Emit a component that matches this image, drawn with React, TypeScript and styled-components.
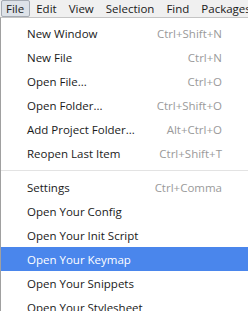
import styled, { createGlobalStyle } from "styled-components";

const GlobalStyle = createGlobalStyle`
  html, body {
    margin: 0;
    padding: 0;
    overflow: hidden;
    background: #ffffff;
  }
`;

const Window = styled.div`
  width: 248px;
  height: 311px;
  overflow: hidden;
  font-family: "Open Sans", "Noto Sans", sans-serif;
  font-size: 11.5px;
  color: #1a1a1a;
  display: flex;
  flex-direction: column;
`;

const MenuBar = styled.div`
  display: flex;
  align-items: center;
  height: 18px;
  background: #f0f0f0;
  padding-left: 1px;
  white-space: nowrap;
`;

interface IMenuTitle {
  active?: boolean;
}
const MenuTitle = styled.div<IMenuTitle>`
  box-sizing: border-box;
  height: 17px;
  line-height: 15px;
  padding: 0 5px 0 4px;
  margin-right: 1px;
  border: 1px solid ${(p) => (p.active ? "#a5abb3" : "transparent")};
  border-radius: 2px;
  background: ${(p) => (p.active ? "#dde2e8" : "transparent")};
`;

const Dropdown = styled.div`
  flex: 1;
  border-top: 1px solid #c4c4c4;
  border-left: 1px solid #a0a0a0;
  background: #ffffff;
  padding-top: 3px;
`;

interface IRow {
  selected?: boolean;
}
const Row = styled.div<IRow>`
  display: flex;
  justify-content: space-between;
  align-items: center;
  height: 24px;
  padding: 0 26px 0 26px;
  background: ${(p) => (p.selected ? "#4a86ec" : "transparent")};
  color: ${(p) => (p.selected ? "#ffffff" : "#1a1a1a")};
  white-space: nowrap;
`;

const Shortcut = styled.span`
  color: #9a9a9a;
`;

const Separator = styled.div`
  height: 1px;
  background: #e3e3e3;
  margin: 5px 0 4px 0;
`;

type Item = { label: string; keys?: string } | "sep";

const items: Item[] = [
  { label: "New Window", keys: "Ctrl+Shift+N" },
  { label: "New File", keys: "Ctrl+N" },
  { label: "Open File...", keys: "Ctrl+O" },
  { label: "Open Folder...", keys: "Ctrl+Shift+O" },
  { label: "Add Project Folder...", keys: "Alt+Ctrl+O" },
  { label: "Reopen Last Item", keys: "Ctrl+Shift+T" },
  "sep",
  { label: "Settings", keys: "Ctrl+Comma" },
  { label: "Open Your Config" },
  { label: "Open Your Init Script" },
  { label: "Open Your Keymap" },
  { label: "Open Your Snippets" },
  { label: "Open Your Stylesheet" },
];

const menus = ["File", "Edit", "View", "Selection", "Find", "Packages"];

const App = () => {
  return (
    <>
      <GlobalStyle />
      <Window>
        <MenuBar>
          {menus.map((m) => (
            <MenuTitle key={m} active={m === "File"}>
              {m}
            </MenuTitle>
          ))}
        </MenuBar>
        <Dropdown>
          {items.map((it, i) =>
            it === "sep" ? (
              <Separator key={i} />
            ) : (
              <Row key={i} selected={it.label === "Open Your Keymap"}>
                <span>{it.label}</span>
                {it.keys && <Shortcut>{it.keys}</Shortcut>}
              </Row>
            )
          )}
        </Dropdown>
      </Window>
    </>
  );
};

export default App;
